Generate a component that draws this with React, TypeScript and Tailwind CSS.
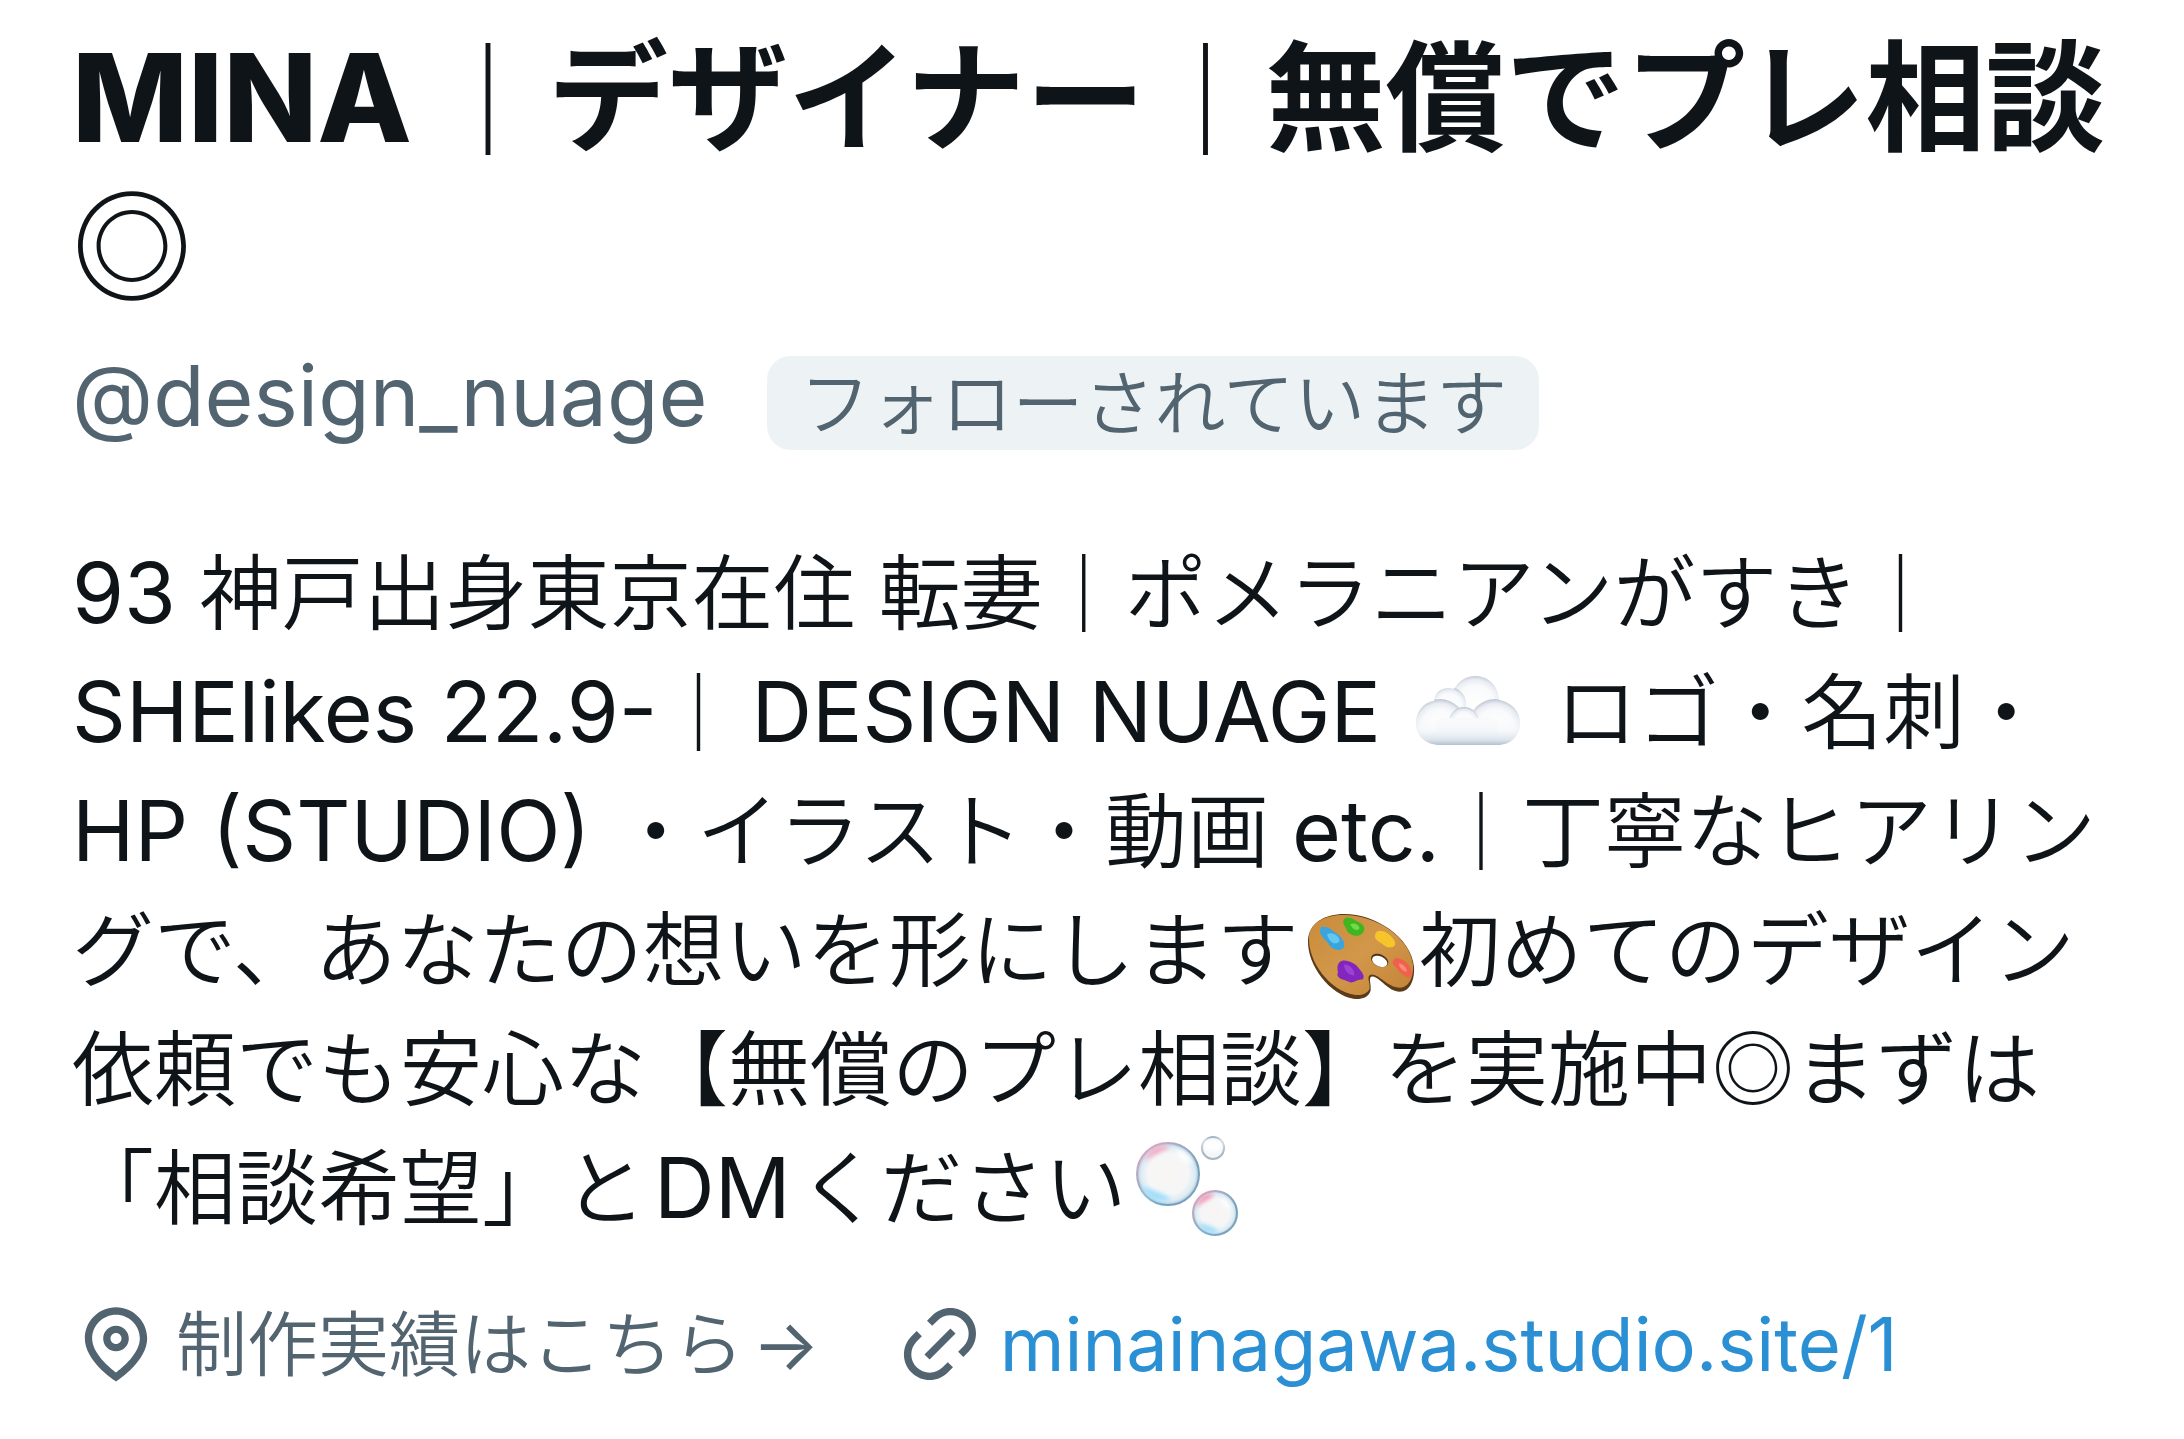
import React from 'react';

interface IconProps {
  className?: string;
}

const CloudEmoji: React.FC<IconProps> = ({ className }) => (
  <svg viewBox="0 0 104 70" className={className} role="img" aria-label="雲">
    <defs>
      <linearGradient id="cloud-body" x1="0" y1="0" x2="0" y2="1">
        <stop offset="0" stopColor="#fafbfd" stopOpacity="0" />
        <stop offset="0.5" stopColor="#f2f5f8" stopOpacity="0.7" />
        <stop offset="0.8" stopColor="#dbe3eb" />
        <stop offset="1" stopColor="#abbacb" />
      </linearGradient>
      <radialGradient id="cloud-puff" cx="0.5" cy="0.58" r="0.58">
        <stop offset="0" stopColor="#ffffff" />
        <stop offset="0.65" stopColor="#f9fafc" />
        <stop offset="0.85" stopColor="#e8ecf2" />
        <stop offset="1" stopColor="#bcc4d2" />
      </radialGradient>
      <clipPath id="cloud-clip">
        <path d="M24 69C10 69 0 60 0 47c0-12 8-21 18-22 1-10 9-15 20-12C43 5 50 0 59 0c13 0 23 9 24 24 12 2 21 11 21 23 0 13-9 22-23 22z" />
      </clipPath>
    </defs>
    <g clipPath="url(#cloud-clip)">
      <rect width="104" height="70" fill="#f3f5f8" />
      <circle cx="59" cy="25" r="26" fill="url(#cloud-puff)" />
      <circle cx="33" cy="28" r="17" fill="url(#cloud-puff)" />
      <circle cx="24" cy="48" r="25" fill="url(#cloud-puff)" />
      <circle cx="79" cy="49" r="26" fill="url(#cloud-puff)" />
      <ellipse cx="48" cy="46" rx="15" ry="15" fill="url(#cloud-puff)" />
      <rect x="20" y="42" width="62" height="22" rx="8" fill="#f7f9fb" />
      <rect y="40" width="104" height="30" fill="url(#cloud-body)" />
    </g>
  </svg>
);

const PaletteEmoji: React.FC<IconProps> = ({ className }) => (
  <svg viewBox="0 0 107 86" className={className} role="img" aria-label="パレット">
    <defs>
      <linearGradient id="palette-wood" x1="0" y1="0" x2="1" y2="1">
        <stop offset="0" stopColor="#c98c3c" />
        <stop offset="0.5" stopColor="#d3974a" />
        <stop offset="1" stopColor="#c28436" />
      </linearGradient>
    </defs>
    <path
      d="M1 26C2 9 17 0 37 0c31 0 66 23 69 52 1 13-4 25-14 25-12 0-19-14-27-15-5 0-1 8-2 14-2 7-10 9-17 8C23 80 0 51 1 26z"
      fill="#5b3b1a"
    />
    <path
      d="M2 23C3 9 17 1 37 1c31 0 65 22 68 49 1 12-4 23-13 23-12 0-20-13-28-13-6 1-1 8-2 14-2 5-9 7-15 6C23 76 1 48 2 23z"
      fill="url(#palette-wood)"
    />
    <path d="M37 5c4-4 10 1 14 3 5 2 8 7 4 11-5 5-14 2-16-4-1-3-5-6-2-10z" fill="#3fb51f" />
    <path d="M43 10c4-2 9 1 9 4-2 4-8 1-9-4z" fill="#72d94c" />
    <path d="M14 13c6-2 11 3 15 6 6 4 10 10 7 15-5 4-13 0-15-5-4-4-11-10-7-16z" fill="#3aa5dc" />
    <path d="M20 20c6-3 13 3 12 7-4 5-11 0-12-7z" fill="#66c8ef" />
    <path d="M68 19c3-5 12-1 16 4 5 5 4 9 0 10-6 1-8-3-12-5-4-3-6-5-4-9z" fill="#f6c52b" />
    <path d="M32 48c4-4 12-1 17 3 3 4 10 10 6 14-6-1-9 5-14 2-4-2-10-2-11-7 2-3-2-7 2-12z" fill="#8226bd" />
    <path d="M37 50c6 0 10 5 10 11-5 0-11-5-10-11z" fill="#9d43d4" />
    <path d="M86 45c4-4 11 1 15 6 4 6 4 11 0 12-5-1-9-5-12-9-2-3-6-5-3-9z" fill="#f0614d" />
    <path d="M91 49c4 0 8 4 8 8-4 0-8-4-8-8z" fill="#fa8b78" />
    <ellipse cx="72" cy="46" rx="9" ry="6" transform="rotate(25 72 46)" fill="#4d3213" />
    <ellipse cx="72" cy="47" rx="8" ry="5" transform="rotate(25 72 47)" fill="#fff" />
  </svg>
);

const BubblesEmoji: React.FC<IconProps> = ({ className }) => (
  <svg viewBox="0 0 104 102" className={className} role="img" aria-label="泡">
    <defs>
      <radialGradient id="bubble-fill">
        <stop offset="0" stopColor="#f8f5f3" />
        <stop offset="0.65" stopColor="#f6f6f7" />
        <stop offset="0.88" stopColor="#dcebf3" />
        <stop offset="1" stopColor="#a9c6d8" />
      </radialGradient>
      <linearGradient id="bubble-rim" x1="0" y1="0" x2="1" y2="1">
        <stop offset="0" stopColor="#f3a4c0" />
        <stop offset="0.35" stopColor="#a3abc0" />
        <stop offset="0.7" stopColor="#6f9fbd" />
        <stop offset="1" stopColor="#8aa4bb" />
      </linearGradient>
      <filter id="bubble-soft">
        <feGaussianBlur stdDeviation="2" />
      </filter>
    </defs>
    <circle cx="33" cy="38" r="31" fill="url(#bubble-fill)" stroke="url(#bubble-rim)" strokeWidth="2" />
    <g filter="url(#bubble-soft)">
      <path d="M9 26C13 13 24 8 35 10c-5 6-18 8-26 16z" fill="#f8a9c4" />
      <path d="M6 50c9 4 20 5 30 13-13 6-26-1-30-13z" fill="#a3dffb" />
      <path d="M40 14c8 0 14 5 17 14-7-1-14-6-17-14z" fill="#fff" />
    </g>
    <circle cx="80" cy="77" r="22" fill="url(#bubble-fill)" stroke="url(#bubble-rim)" strokeWidth="2" />
    <g filter="url(#bubble-soft)">
      <path d="M61 72c2-10 10-15 18-14-3 6-11 6-18 14z" fill="#f78fb0" />
      <path d="M63 87c8 2 14 2 21 9-9 3-17-1-21-9z" fill="#9fdcf8" />
      <path d="M86 62c5 1 9 6 10 11-5-1-9-5-10-11z" fill="#fff" />
    </g>
    <circle cx="78" cy="12" r="11" fill="#f4f6f8" stroke="#a9b7c4" strokeWidth="2" />
    <path d="M68 4h20v8c-5 4-15 4-20 0z" fill="#fff" filter="url(#bubble-soft)" />
  </svg>
);

const PinIcon: React.FC<IconProps> = ({ className }) => (
  <svg viewBox="0 0 24 24" className={className} fill="currentColor" aria-hidden="true">
    <path d="M12 7c-1.93 0-3.5 1.57-3.5 3.5S10.07 14 12 14s3.5-1.57 3.5-3.5S13.93 7 12 7zm0 5c-.827 0-1.5-.673-1.5-1.5S11.173 9 12 9s1.5.673 1.5 1.5S12.827 12 12 12zm0-10c-4.687 0-8.5 3.813-8.5 8.5 0 5.967 7.621 11.116 7.945 11.332l.555.37.555-.37c.324-.216 7.945-5.365 7.945-11.332C20.5 5.813 16.687 2 12 2zm0 17.77c-1.665-1.241-6.5-5.196-6.5-9.27C5.5 6.916 8.416 4 12 4s6.5 2.916 6.5 6.5c0 4.073-4.835 8.028-6.5 9.27z" />
  </svg>
);

const LinkIcon: React.FC<IconProps> = ({ className }) => (
  <svg viewBox="0 0 24 24" className={className} fill="currentColor" aria-hidden="true">
    <path d="M18.36 5.64c-1.95-1.96-5.11-1.96-7.07 0L9.88 7.05 8.46 5.64l1.42-1.42c2.73-2.73 7.16-2.73 9.9 0 2.73 2.74 2.73 7.17 0 9.9l-1.42 1.42-1.41-1.42 1.41-1.41c1.96-1.96 1.96-5.12 0-7.07zm-2.12 3.53l-7.07 7.07-1.41-1.41 7.07-7.07 1.41 1.41zm-12.02.71l1.42-1.42 1.41 1.42-1.41 1.41c-1.96 1.96-1.96 5.12 0 7.07 1.95 1.96 5.11 1.96 7.07 0l1.41-1.41 1.42 1.41-1.42 1.42c-2.73 2.73-7.16 2.73-9.9 0-2.73-2.74-2.73-7.17 0-9.9z" />
  </svg>
);

const Bar = () => (
  <span className="px-[2px] text-[78px] leading-none font-medium font-['Noto_Sans_CJK_JP',sans-serif]">｜</span>
);

const TitleBar = () => <span className="px-1 text-[112px] leading-none font-medium">｜</span>;

const Latin: React.FC<{ children: React.ReactNode; className?: string }> = ({ children, className }) => (
  <span className={`text-[84px] leading-none ${className ?? ''}`}>{children}</span>
);

const App: React.FC = () => {
  return (
    <main
      className="min-h-screen bg-white px-18 pt-6 pb-6 font-['Inter','Noto_Sans_CJK_JP_DemiLight','Noto_Sans_CJK_JP',sans-serif] text-[#0f1419]"
      lang="ja"
    >
      <h1 className="text-[120px] leading-[150px] font-bold whitespace-nowrap font-['Inter','Noto_Sans_CJK_JP',sans-serif]">
        <span className="mr-4 text-[123px] leading-none font-extrabold">MINA</span>
        <TitleBar />
        デザイナー
        <TitleBar />
        無償でプレ相談
        <br />
        <span className="font-medium">◎</span>
      </h1>

      <div className="flex items-start gap-15 mt-8 text-[#536471]">
        <span className="text-[84px] leading-[80px]">@design_nuage</span>
        <span className="rounded-3xl bg-[#edf3f4] px-8 text-[71px] leading-[94px]">
          フォローされています
        </span>
      </div>

      <p className="mt-21 text-[82px] leading-[119px] whitespace-nowrap">
        <Latin>93 </Latin>
        神戸出身東京在住 転妻
        <Bar />
        ポメラニアンがすき
        <Bar />
        <br />
        <Latin>SHElikes 22.9-</Latin>
        <Bar />
        <Latin className="ml-3">DESIGN NUAGE</Latin> <CloudEmoji className="inline-block align-[-4px] w-26 mx-3" /> ロゴ・名刺・
        <br />
        <Latin>HP (STUDIO) </Latin>
        ・イラスト・動画 <Latin>etc.</Latin>
        <Bar />
        丁寧なヒアリン
        <br />
        グで、あなたの想いを形にします
        <PaletteEmoji className="inline-block w-27 ml-2 mr-1" />
        初めてのデザイン
        <br />
        依頼でも安心な【無償のプレ相談】を実施中◎まずは
        <br />
        「相談希望」と<Latin className="mx-2">DM</Latin>ください
        <BubblesEmoji className="inline-block align-[-20px] w-26 ml-2" />
      </p>

      <div className="flex items-center mt-10 text-[71px] leading-[112px] text-[#536471]">
        <PinIcon className="size-22 mr-4" />
        <span>制作実績はこちら</span>
        <span className="ml-2">→</span>
        <LinkIcon className="size-22 ml-19 mr-4" />
        <a href="https://minainagawa.studio.site/1" className="text-[74px] text-[#2b8fd3]">
          minainagawa.studio.site/1
        </a>
      </div>
    </main>
  );
};

export default App;
